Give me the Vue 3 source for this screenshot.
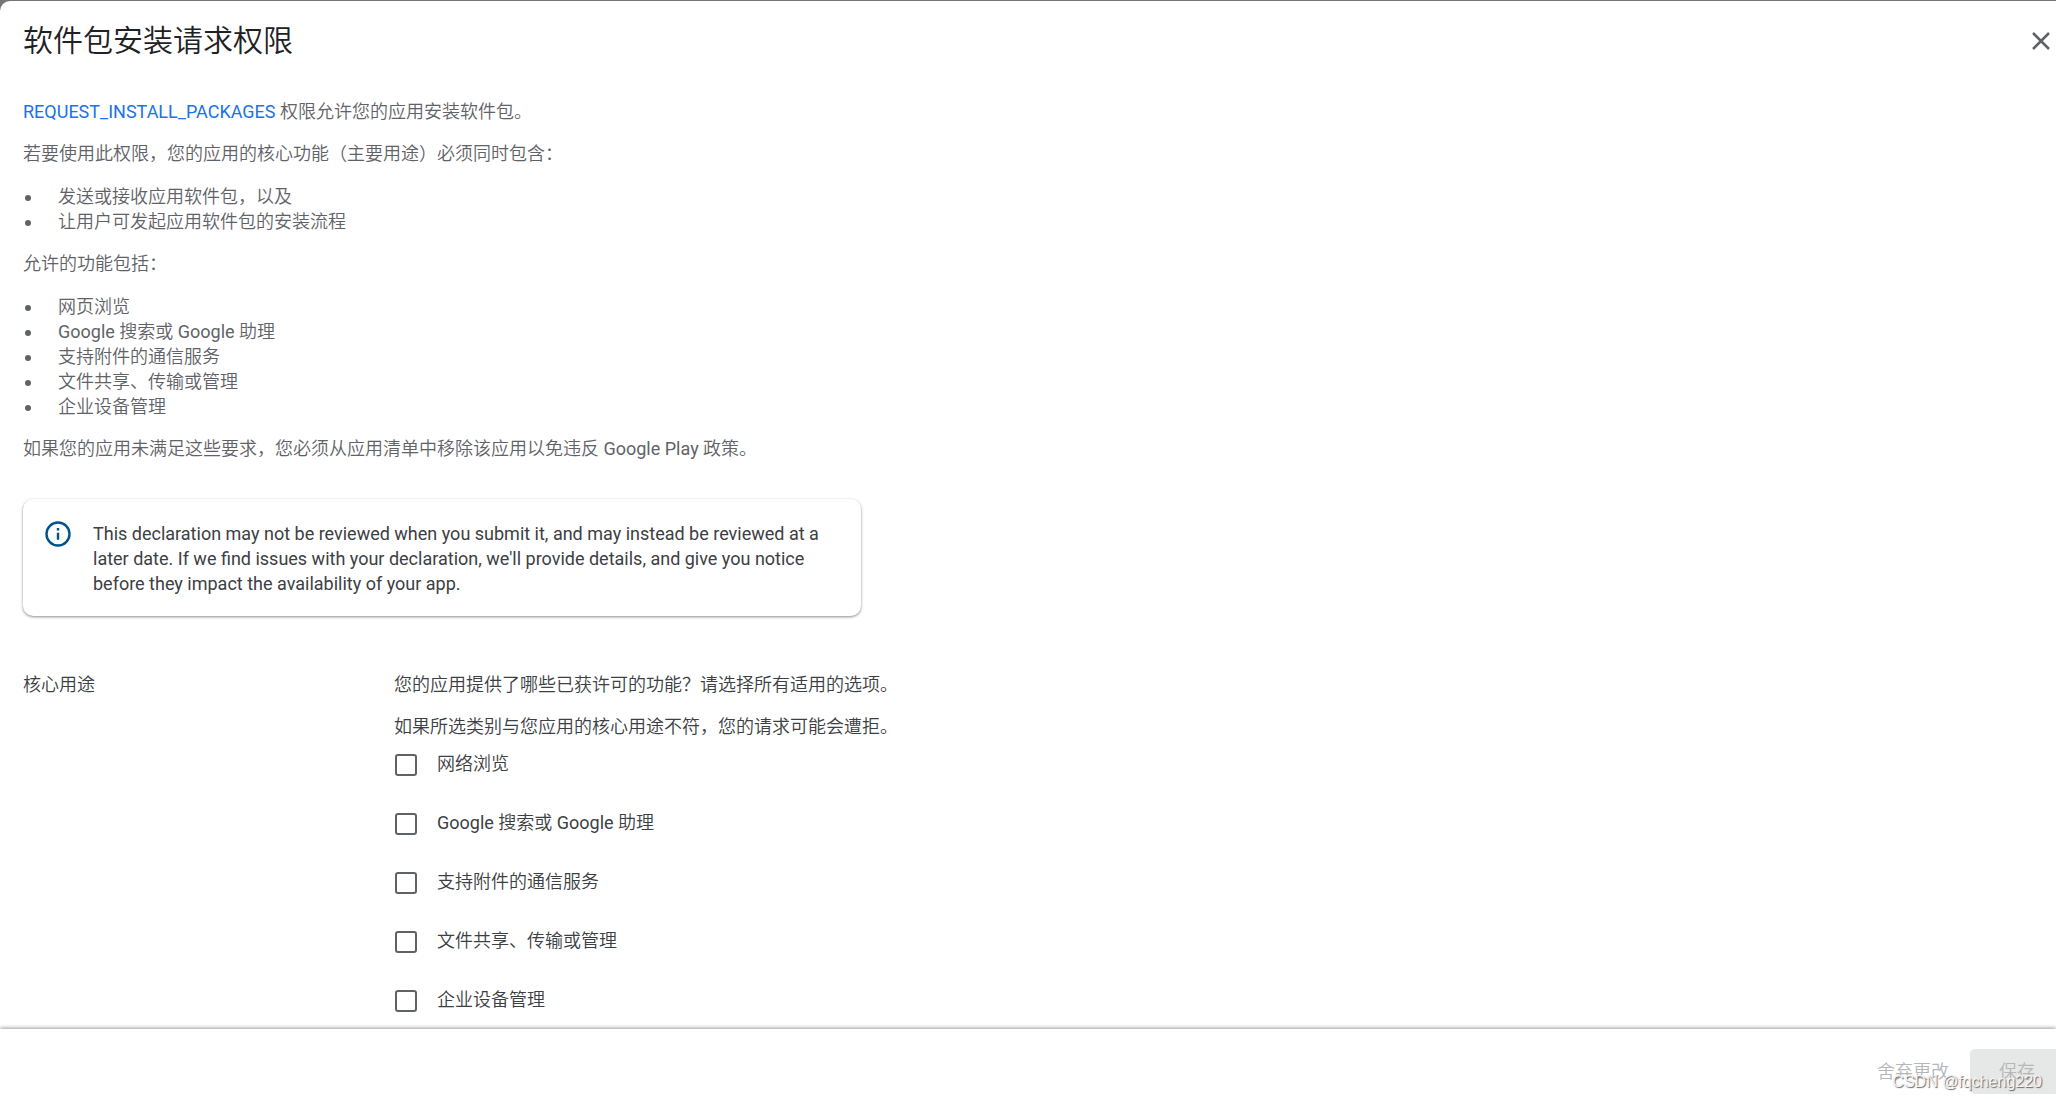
<script setup>
import { ref } from 'vue'

const requirements = ['发送或接收应用软件包，以及', '让用户可发起应用软件包的安装流程']
const features = [
  '网页浏览',
  'Google 搜索或 Google 助理',
  '支持附件的通信服务',
  '文件共享、传输或管理',
  '企业设备管理',
]
const options = [
  { id: 'browse', label: '网络浏览' },
  { id: 'search', label: 'Google 搜索或 Google 助理' },
  { id: 'message', label: '支持附件的通信服务' },
  { id: 'files', label: '文件共享、传输或管理' },
  { id: 'device', label: '企业设备管理' },
]
const selected = ref([])
</script>

<template>
  <div class="dialog">
    <header class="header">
      <h1>软件包安装请求权限</h1>
      <button class="close" type="button" aria-label="关闭">
        <svg viewBox="0 0 18 18" width="18" height="18" aria-hidden="true">
          <path d="M1 1 17 17M17 1 1 17" fill="none" stroke="currentColor" stroke-width="2.5" />
        </svg>
      </button>
    </header>

    <main class="body">
      <section class="intro">
        <p><a href="#">REQUEST_INSTALL_PACKAGES</a> 权限允许您的应用安装软件包。</p>
        <p>若要使用此权限，您的应用的核心功能（主要用途）必须同时包含：</p>
        <ul>
          <li v-for="item in requirements" :key="item">{{ item }}</li>
        </ul>
        <p>允许的功能包括：</p>
        <ul>
          <li v-for="item in features" :key="item">{{ item }}</li>
        </ul>
        <p>如果您的应用未满足这些要求，您必须从应用清单中移除该应用以免违反 Google Play 政策。</p>
      </section>

      <aside class="notice">
        <svg viewBox="0 0 26 26" width="26" height="26" aria-hidden="true">
          <circle cx="13" cy="13" r="11.5" fill="none" stroke="#00538a" stroke-width="2.4" />
          <path d="M11.8 11.8h2.4v7h-2.4zM11.8 7h2.4v2.5h-2.4z" fill="#00538a" />
        </svg>
        <p>
          This declaration may not be reviewed when you submit it, and may instead be reviewed at a
          later date. If we find issues with your declaration, we'll provide details, and give you notice
          before they impact the availability of your app.
        </p>
      </aside>

      <section class="question">
        <h2>核心用途</h2>
        <div class="answers">
          <p>您的应用提供了哪些已获许可的功能？请选择所有适用的选项。</p>
          <p>如果所选类别与您应用的核心用途不符，您的请求可能会遭拒。</p>
          <div class="options">
            <div v-for="option in options" :key="option.id" class="option">
              <input :id="option.id" v-model="selected" type="checkbox" :value="option.id" />
              <label :for="option.id">{{ option.label }}</label>
            </div>
          </div>
        </div>
      </section>
    </main>

    <footer class="footer">
      <button class="discard" type="button" disabled>舍弃更改</button>
      <button class="save" type="button" disabled>保存</button>
      <span class="watermark">CSDN @fqcheng220</span>
    </footer>
  </div>
</template>

<style>
body {
  background: #757575;
  overflow: hidden;
}
</style>

<style scoped>
.dialog {
  box-sizing: border-box;
  display: flex;
  flex-direction: column;
  height: calc(100vh - 1px);
  margin-top: 1px;
  overflow: hidden;
  background: #fff;
  border-top-left-radius: 10px;
  color: #3c4043;
  font: 18px/25px Roboto, "Noto Sans CJK SC DemiLight", "Noto Sans CJK SC Light", "Noto Sans CJK SC", sans-serif;
}
h1, h2, p, ul {
  margin: 0;
}
button {
  border: 0;
  font: inherit;
}
.header {
  display: flex;
  align-items: center;
  justify-content: space-between;
  flex: none;
  height: 80px;
  padding: 0 6px 0 23px;
}
h1 {
  color: #202124;
  font-size: 30px;
  font-weight: 350;
  line-height: 40px;
}
.close {
  display: flex;
  padding: 0;
  background: none;
  color: #5f6368;
}
.body {
  flex: 1;
  min-height: 0;
  overflow: hidden;
  padding: 18px 23px 0;
}
.intro {
  display: flex;
  flex-direction: column;
  gap: 17px;
  color: #5f6368;
}
a {
  color: #1a73e8;
  text-decoration: none;
}
ul {
  padding: 1px 0 0;
  list-style: none;
}
li {
  display: flex;
  align-items: center;
  gap: 27px;
}
li::before {
  content: "";
  width: 6px;
  height: 6px;
  margin: 2px 0 0 2px;
  border-radius: 50%;
  background: #5f6368;
}
.notice {
  box-sizing: border-box;
  display: flex;
  gap: 22px;
  max-width: 838px;
  margin-top: 38px;
  padding: 22px 24px 20px 22px;
  border-radius: 10px;
  box-shadow: 0 1px 3px rgba(60, 64, 67, 0.45), 0 1px 2px rgba(60, 64, 67, 0.2);
}
.notice svg {
  flex: none;
}
.question {
  display: flex;
  margin-top: 56px;
}
h2 {
  flex: none;
  width: 371px;
  font-size: 18px;
  font-weight: 400;
}
.answers p + p {
  margin-top: 17px;
}
.options {
  display: grid;
  gap: 34px;
  margin-top: 12px;
}
.option {
  display: flex;
  gap: 20px;
}
input {
  appearance: none;
  box-sizing: border-box;
  width: 22px;
  height: 22px;
  margin: 3px 0 0 1px;
  border: 2px solid #5f6368;
  border-radius: 3px;
}
input:checked {
  background: #1a73e8;
  border-color: #1a73e8;
}
.footer {
  box-sizing: border-box;
  position: relative;
  display: flex;
  align-items: flex-start;
  justify-content: flex-end;
  gap: 21px;
  flex: none;
  height: 70px;
  padding-top: 20px;
  box-shadow: 0 -1px 4px rgba(0, 0, 0, 0.4);
}
.footer button {
  height: 45px;
  padding: 0;
  background: none;
  color: #b5b7b8;
}
.footer .save {
  width: 86px;
  padding-left: 8px;
  border-radius: 5px 0 0 5px;
  background: #e6e8e7;
}
.watermark {
  position: absolute;
  right: 14px;
  bottom: 6px;
  color: #f4f4f4;
  font: 16px/22px "Liberation Sans", sans-serif;
  text-shadow: 1px 1px 1px #666;
}
</style>
